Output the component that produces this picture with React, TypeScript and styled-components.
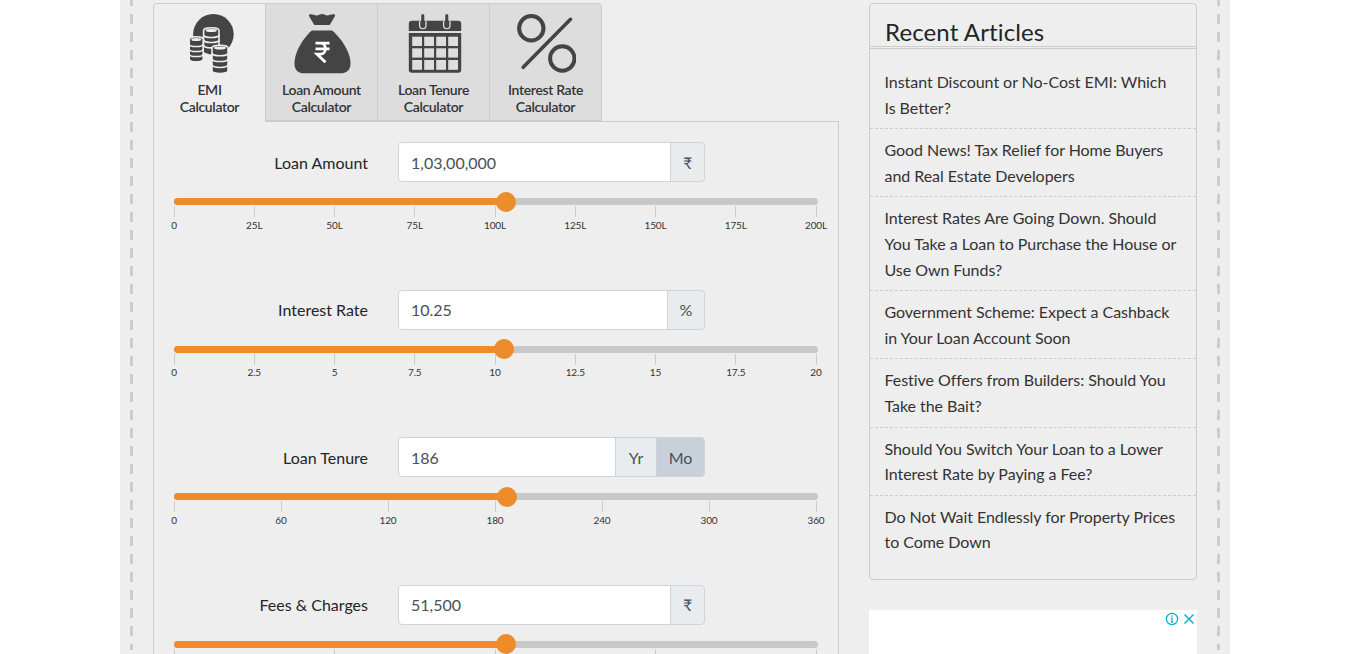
import React from 'react';
import styled, { createGlobalStyle } from 'styled-components';

const GlobalStyle = createGlobalStyle`
  html, body {
    margin: 0;
    padding: 0;
    height: 654px;
    overflow: hidden;
    background: #fff;
    font-family: Lato, "Open Sans", sans-serif;
    color: #212529;
  }
  * { box-sizing: border-box; }
`;

const Page = styled.div`
  width: 1110px;
  height: 654px;
  margin-left: 120px;
  padding: 0 10px;
  background: #eee;
  overflow: hidden;
`;

const Frame = styled.div`
  display: flex;
  gap: 30px;
  height: 100%;
  padding: 3px 23px 0;
  background-image:
    repeating-linear-gradient(to bottom, #ccc 0 10px, transparent 10px 18px),
    repeating-linear-gradient(to bottom, #ccc 0 10px, transparent 10px 18px);
  background-size: 3px 100%;
  background-repeat: no-repeat;
  background-position: left 0 top -4px, right 0 top -4px;
`;

const Main = styled.main`
  width: 686px;
  flex: none;
`;

const TabStrip = styled.div`
  display: flex;
  margin-bottom: -1px;
  position: relative;
`;

const Tab = styled.div<{ $active?: boolean }>`
  width: 113px;
  height: ${(p) => (p.$active ? '119px' : '118px')};
  margin-left: -1px;
  padding-top: 8px;
  display: flex;
  flex-direction: column;
  align-items: center;
  background: ${(p) => (p.$active ? '#eee' : '#ddd')};
  border: 1px solid #ccc;
  border-bottom: ${(p) => (p.$active ? 'none' : '1px solid #ccc')};
  font-size: 14px;
  font-weight: 600;
  letter-spacing: -0.35px;
  line-height: 17px;
  text-align: center;
  color: #333;

  &:first-child {
    margin-left: 0;
    border-top-left-radius: 4px;
  }
  &:last-child {
    border-top-right-radius: 4px;
  }
  svg {
    flex: none;
    display: block;
    margin-bottom: 7px;
  }
`;

const Panel = styled.section`
  height: 560px;
  padding: 20px 20px 0;
  border: 1px solid #ccc;
  border-bottom: none;
`;

const CalcRow = styled.div`
  height: 147.5px;
`;

const Field = styled.div`
  display: flex;
  align-items: center;
  gap: 30px;
  height: 40px;
  margin-bottom: 16px;
`;

const FieldLabel = styled.label`
  width: 194px;
  text-align: right;
  font-size: 16px;
  color: #212529;
`;

const InputGroup = styled.div`
  display: flex;
  width: 307px;
  height: 40px;
`;

const TextInput = styled.input`
  flex: 1;
  min-width: 0;
  height: 100%;
  padding: 0 12px;
  border: 1px solid #ced4da;
  border-radius: 4px 0 0 4px;
  background: #fff;
  font: 400 16px Lato, sans-serif;
  color: #495057;
  outline: none;
`;

const Addon = styled.span<{ $on?: boolean; $w: number }>`
  display: flex;
  align-items: center;
  justify-content: center;
  width: ${(p) => p.$w}px;
  flex: none;
  margin-left: -1px;
  background: ${(p) => (p.$on ? '#c8d1da' : '#e9ecef')};
  border: 1px solid #ced4da;
  font-family: Lato, "Liberation Sans", sans-serif;
  font-size: 16px;
  color: #495057;

  &:last-child {
    border-radius: 0 4px 4px 0;
  }
`;

const Track = styled.div`
  position: relative;
  width: 100%;
  height: 7px;
  border-radius: 4px;
  background: #c8c8c8;
`;

const Fill = styled.div`
  height: 100%;
  border-radius: 4px;
  background: #ed8c2b;
`;

const Thumb = styled.div`
  position: absolute;
  top: 50%;
  width: 20px;
  height: 20px;
  border-radius: 50%;
  background: #ed8c2b;
  transform: translate(-50%, -50%);
`;

const Ticks = styled.div`
  display: flex;
  justify-content: space-between;
  width: 642px;
  margin-top: 1px;
`;

const Tick = styled.div`
  width: 0;
  display: flex;
  flex-direction: column;
  align-items: center;
  font-size: 10px;
  letter-spacing: -0.15px;
  line-height: 12px;
  color: #333;
  white-space: nowrap;

  &::before {
    content: '';
    flex: none;
    width: 1px;
    height: 11px;
    margin-bottom: 1.5px;
    background: #ccc;
  }
`;

const Side = styled.aside`
  width: 328px;
  flex: none;
`;

const Articles = styled.div`
  height: 577px;
  border: 1px solid #ccc;
  border-radius: 4px;
`;

const ArticlesTitle = styled.h2`
  margin: 0;
  height: 45px;
  padding: 13px 0 0 15px;
  border-bottom: 3px double #ccc;
  font-size: 24px;
  font-weight: 400;
  letter-spacing: 0.12px;
  line-height: 29px;
  overflow: hidden;
  color: #212529;
`;

const ArticleList = styled.ul`
  list-style: none;
  margin: 0;
  padding: 20px 0 0;
`;

const ArticleItem = styled.li`
  padding: 0 17px 8px 14.5px;
  font-size: 16px;
  letter-spacing: -0.05px;
  line-height: 25.6px;
  color: #333;

  & + & {
    padding-top: 8px;
    border-top: 1px dashed #ccc;
  }
`;

const Ad = styled.div`
  position: relative;
  height: 280px;
  margin-top: 30px;
  background: #fff;
`;

const AdIcons = styled.div`
  position: absolute;
  top: 2px;
  right: 2px;
  display: flex;
  gap: 4px;
`;

const DARK = '#444';
const BG = '#eee';

const CoinStack = ({ x, y, w, n, h }: { x: number; y: number; w: number; n: number; h: number }) => {
  const ry = 2.6;
  const bottom = y + ry * 2 + n * h;
  const bands = [];
  for (let i = 1; i < n; i++) {
    const by = y + ry + i * h - 0.4;
    bands.push(
      <path key={i} d={`M${x} ${by}a${w / 2} ${ry} 0 0 0 ${w} 0`} fill="none" stroke={BG} strokeWidth="1.5" />,
    );
  }
  return (
    <g>
      <path
        d={`M${x} ${y + ry}a${w / 2} ${ry} 0 0 1 ${w} 0V${bottom - ry}a${w / 2} ${ry} 0 0 1 ${-w} 0Z`}
        fill={DARK}
        stroke={BG}
        strokeWidth="1.6"
      />
      {bands}
      <ellipse cx={x + w / 2} cy={y + ry + 0.2} rx={w / 2 - 2} ry={ry - 1} fill={BG} />
    </g>
  );
};

const CoinsIcon = () => (
  <svg width="60" height="62" viewBox="0 0 60 62">
    <circle cx="33.4" cy="22.3" r="20.3" fill={DARK} />
    <CoinStack x={23.6} y={15.7} w={15.4} n={3} h={5} />
    <CoinStack x={9.2} y={24.7} w={14} n={4} h={5} />
    <CoinStack x={32} y={33.2} w={16} n={4} h={5.8} />
  </svg>
);

const BagIcon = () => (
  <svg width="60" height="62" viewBox="0 0 60 62">
    <path
      d="M17.5 2.6c2.5 -.9 5 .8 7 .8s3.700 -1.500 5.500 -1.500 3.700 1.500 5.500 1.500 4.500 -1.700 7 -.8c1 .4 .6 1.400 .1 2.200l-4.600 7.600a1 1 0 0 1 -1 .6h-14a1 1 0 0 1 -1 -.6l-4.600 -7.600c-.5 -.8 -.9 -1.800 .1 -2.200Z"
      fill={DARK}
    />
    <path
      d="M20 18.500h20c5 3.500 18.500 19 18.500 33 0 7 -4.500 9.800 -10 9.800H12c-5.500 0 -9.500 -2.800 -9.500 -9.800C2.500 37.500 15 22 20 18.500Z"
      fill={DARK}
    />
    <path
      d="M23.500 31.200h14M23.500 36.800h14M25 31.200h3.500c6.500 0 6.500 11 0 11H25l8.500 8"
      fill="none"
      stroke="#fff"
      strokeWidth="2.800"
    />
  </svg>
);

const CalendarIcon = () => {
  const cols = [8.2, 20.200, 32.200, 44.200];
  const rows = [24.700, 36.300, 48];
  return (
    <svg width="60" height="62" viewBox="0 0 60 62">
      <path d="M4.800 11.700a3 3 0 0 1 3 -3h46.400a3 3 0 0 1 3 3v7.300H4.800Z" fill={DARK} />
      <path d="M4.800 21h52.400v36.700a3 3 0 0 1 -3 3H7.800a3 3 0 0 1 -3 -3Z" fill={DARK} />
      {rows.map((y) =>
        cols.map((x) => <rect key={`${x}-${y}`} x={x} y={y} width="9.800" height={y === 48 ? 9.800 : 9.300} fill="#ddd" />),
      )}
      <path d="M15.600 9v4.500a3.200 3.200 0 0 0 6.400 0V9" fill="none" stroke="#ddd" strokeWidth="1.300" />
      <path d="M39.600 9v4.500a3.200 3.200 0 0 0 6.400 0V9" fill="none" stroke="#ddd" strokeWidth="1.300" />
      <path d="M18.800 3.500v9M42.800 3.500v9" stroke={DARK} strokeWidth="3" strokeLinecap="round" />
    </svg>
  );
};

const PercentIcon = () => (
  <svg width="60" height="62" viewBox="0 0 60 62" fill="none" stroke={DARK} strokeWidth="4">
    <circle cx="15.300" cy="16.200" r="12.200" />
    <circle cx="46.300" cy="46.500" r="12.200" />
    <path d="M54.500 7.300 7.200 55.300" strokeLinecap="round" strokeWidth="3.600" />
  </svg>
);

const tabs = [
  { lines: ['EMI', 'Calculator'], icon: <CoinsIcon />, active: true },
  { lines: ['Loan Amount', 'Calculator'], icon: <BagIcon /> },
  { lines: ['Loan Tenure', 'Calculator'], icon: <CalendarIcon /> },
  { lines: ['Interest Rate', 'Calculator'], icon: <PercentIcon /> },
];

const calcs = [
  {
    label: 'Loan Amount',
    value: '1,03,00,000',
    pct: 51.5,
    addons: [{ text: '₹', w: 35 }],
    ticks: ['0', '25L', '50L', '75L', '100L', '125L', '150L', '175L', '200L'],
  },
  {
    label: 'Interest Rate',
    value: '10.25',
    pct: 51.25,
    addons: [{ text: '%', w: 38 }],
    ticks: ['0', '2.5', '5', '7.5', '10', '12.5', '15', '17.5', '20'],
  },
  {
    label: 'Loan Tenure',
    value: '186',
    pct: 51.67,
    addons: [
      { text: 'Yr', w: 42 },
      { text: 'Mo', w: 49, on: true },
    ],
    ticks: ['0', '60', '120', '180', '240', '300', '360'],
  },
  {
    // labels of this scale fall below the fold
    label: 'Fees & Charges',
    value: '51,500',
    pct: 51.5,
    addons: [{ text: '₹', w: 35 }],
    ticks: ['', '', '', '', ''],
  },
];

const articles = [
  'Instant Discount or No-Cost EMI: Which Is Better?',
  'Good News! Tax Relief for Home Buyers and Real Estate Developers',
  'Interest Rates Are Going Down. Should You Take a Loan to Purchase the House or Use Own Funds?',
  'Government Scheme: Expect a Cashback in Your Loan Account Soon',
  'Festive Offers from Builders: Should You Take the Bait?',
  'Should You Switch Your Loan to a Lower Interest Rate by Paying a Fee?',
  'Do Not Wait Endlessly for Property Prices to Come Down',
];

const App = () => (
  <>
    <GlobalStyle />
    <Page>
      <Frame>
        <Main>
          <TabStrip>
            {tabs.map((t) => (
              <Tab key={t.lines[0]} $active={t.active}>
                {t.icon}
                <span>{t.lines[0]}</span>
                <span>{t.lines[1]}</span>
              </Tab>
            ))}
          </TabStrip>
          <Panel>
            {calcs.map((c) => (
              <CalcRow key={c.label}>
                <Field>
                  <FieldLabel>{c.label}</FieldLabel>
                  <InputGroup>
                    <TextInput defaultValue={c.value} readOnly />
                    {c.addons.map((a) => (
                      <Addon key={a.text} $w={a.w} $on={a.on}>
                        {a.text}
                      </Addon>
                    ))}
                  </InputGroup>
                </Field>
                <Track>
                  <Fill style={{ width: `${c.pct}%` }} />
                  <Thumb style={{ left: `${c.pct}%` }} />
                </Track>
                <Ticks>
                  {c.ticks.map((t, i) => (
                    <Tick key={i}>{t}</Tick>
                  ))}
                </Ticks>
              </CalcRow>
            ))}
          </Panel>
        </Main>
        <Side>
          <Articles>
            <ArticlesTitle>Recent Articles</ArticlesTitle>
            <ArticleList>
              {articles.map((a) => (
                <ArticleItem key={a}>{a}</ArticleItem>
              ))}
            </ArticleList>
          </Articles>
          <Ad>
            <AdIcons>
              <svg width="14" height="14" viewBox="0 0 14 14" fill="none" stroke="#00aecd" strokeWidth="1.200">
                <circle cx="7" cy="7" r="5.600" />
                <path d="M7 6v4.200M5.800 10.200h2.400M5.800 6h1.200" />
                <path d="M7 3.400v1.300" strokeWidth="1.400" />
              </svg>
              <svg width="12" height="14" viewBox="0 0 12 14" fill="none" stroke="#00aecd" strokeWidth="1.400">
                <path d="M1.500 2.500 10.500 11.500M10.500 2.500 1.500 11.500" />
              </svg>
            </AdIcons>
          </Ad>
        </Side>
      </Frame>
    </Page>
  </>
);

export default App;
